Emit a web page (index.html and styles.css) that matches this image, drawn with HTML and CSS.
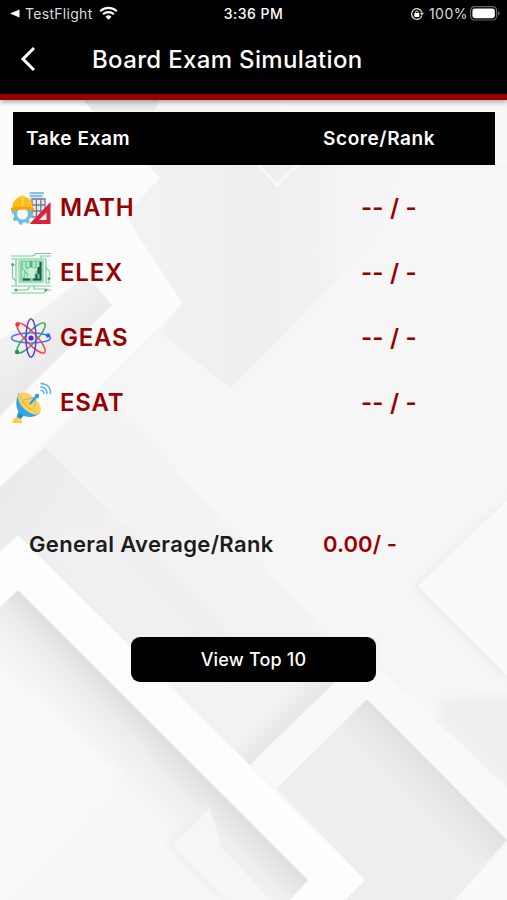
FILE: index.html
```html
<!DOCTYPE html>
<html lang="en">
<head>
    <meta charset="UTF-8">
    <meta name="viewport" content="width=device-width, initial-scale=1.0">
    <title>Board Exam Simulation</title>
    <link rel="stylesheet" href="styles.css">
</head>
<body>
    <!-- Background pattern -->
    <svg class="background" viewBox="0 0 507 900" aria-hidden="true">
        <defs>
            <linearGradient id="shadeDown" gradientUnits="userSpaceOnUse" x1="168" y1="740" x2="118" y2="790">
                <stop offset="0" stop-color="#dedede"/>
                <stop offset="0.4" stop-color="#eeeeee"/>
                <stop offset="1" stop-color="#f8f8f8"/>
            </linearGradient>
            <linearGradient id="shadeUp" gradientUnits="userSpaceOnUse" x1="100" y1="617" x2="165" y2="552">
                <stop offset="0" stop-color="#f4f4f4"/>
                <stop offset="1" stop-color="#ededed"/>
            </linearGradient>
            <linearGradient id="shadeCenter" gradientUnits="userSpaceOnUse" x1="150" y1="220" x2="370" y2="220">
                <stop offset="0" stop-color="#f2f2f2"/>
                <stop offset="0.5" stop-color="#eeeeee"/>
                <stop offset="1" stop-color="#f5f5f5"/>
            </linearGradient>
            <linearGradient id="shadeLeft" gradientUnits="userSpaceOnUse" x1="20" y1="330" x2="52" y2="366">
                <stop offset="0" stop-color="#f2f2f2"/>
                <stop offset="1" stop-color="#e9e9e9"/>
            </linearGradient>
            <linearGradient id="shadeLeftEnd" gradientUnits="userSpaceOnUse" x1="0" y1="487" x2="100" y2="560">
                <stop offset="0" stop-color="#ebebeb"/>
                <stop offset="1" stop-color="#f0f0f0"/>
            </linearGradient>
            <linearGradient id="shadeRight" gradientUnits="userSpaceOnUse" x1="437" y1="769" x2="400" y2="806">
                <stop offset="0" stop-color="#e0e0e0"/>
                <stop offset="0.5" stop-color="#eaeaea"/>
                <stop offset="1" stop-color="#f0f0f0"/>
            </linearGradient>
            <linearGradient id="shadeJoint" gradientUnits="userSpaceOnUse" x1="292" y1="724" x2="272" y2="704">
                <stop offset="0" stop-color="#e6e6e6"/>
                <stop offset="1" stop-color="#f2f2f2"/>
            </linearGradient>
            <filter id="soft" x="-30%" y="-30%" width="160%" height="160%">
                <feGaussianBlur stdDeviation="6"/>
            </filter>
        </defs>
        <rect width="507" height="900" fill="#f6f6f6"/>
        <!-- upper part -->
        <path d="M0 100H82L160 178L125 215L182 303L0 487Z" fill="#fcfcfc"/>
        <path d="M84 100H160L155 110H92Z" fill="#e8e8e8"/>
        <path d="M148 165H400L375 243L230 388L160 333L182 303L125 215L160 178Z" fill="url(#shadeCenter)"/>
        <path d="M300 165H507V100H280Z" fill="#f8f8f8"/>
        <path d="M258 165L277 185L298 165" fill="none" stroke="#f8f8f8" stroke-width="3"/>
        <path d="M160 325L182 303L125 215L100 245Z" fill="#fcfcfc"/>
        <path d="M0 340L85 277Q100 290 112 305L0 416Z" fill="url(#shadeLeft)"/>
        <path d="M45 447L102 390L330 637H232L97 500Z" fill="#f3f3f3"/>
        <path d="M0 487L45 447L232 637L175 692L18 535L0 552Z" fill="url(#shadeLeftEnd)"/>
        <path d="M45 535L125 530L232 637L175 665Z" fill="url(#shadeUp)" filter="url(#soft)"/>
        <path d="M507 455L465 489L507 530M507 470L480 489L507 515" fill="none" stroke="#f9f9f9" stroke-width="1.5"/>
        <!-- right square -->
        <path d="M510 498L414 586L510 680Z" fill="#ebebeb" filter="url(#soft)"/>
        <path d="M507 500L418 586L507 675Z" fill="#fafafa"/>
        <path d="M520 695L440 700L440 720L520 800Z" fill="#eeeeee" filter="url(#soft)"/>
        <!-- lower part -->
        <path d="M0 607L5 602L18 590L308 880L290 900H0Z" fill="url(#shadeDown)"/>
        <path d="M-20 650L120 775L-20 920Z" fill="#fafafa" filter="url(#soft)"/>
        <path d="M0 602L150 757L20 890M0 635L120 755L40 835" fill="none" stroke="#fafafa" stroke-width="0.8" opacity="0.7"/>
        <path d="M208 802L167 845L222 900H260Z" fill="#ededed" filter="url(#soft)"/>
        <path d="M215 803L172 845L227 900H290L308 880L222 794Z" fill="url(#shadeDown)"/>
        <path d="M210 808L172 845L227 900H270L222 848Z" fill="#f6f6f6"/>
        <path d="M232 637H380V665L250 765L150 665Z" fill="#f3f3f3"/>
        <path d="M232 682H335L250 765L175 692Z" fill="url(#shadeJoint)"/>
        <path d="M277 788L367 699L507 840L455 900H345L365 880Z" fill="#eeeeee"/>
        <path d="M367 699L507 840L473 875L335 730Z" fill="url(#shadeRight)"/>
        <path d="M250 765L335 682L385 672L507 788V840L367 699L277 788Z" fill="#f9f9f9"/>
        <path d="M507 845L455 900H507Z" fill="#fafafa"/>
        <path d="M0 552L18 535L365 880L345 900H290L308 880L18 590L5 602L0 607Z" fill="#fdfdfd"/>
    </svg>

    <div class="app">
        <header class="header">
            <div class="status-bar">
                <div class="status-left">
                    <svg width="10" height="9" viewBox="0 0 10 9"><path d="M0 4.5L9.5 0.5V8.5Z" fill="#fff"/></svg>
                    <span class="carrier">TestFlight</span>
                    <svg class="wifi" width="19" height="14" viewBox="0 0 19 14">
                        <path d="M1.2 5.2a12 12 0 0 1 16.6 0M4.1 8.3a7.8 7.8 0 0 1 10.8 0" fill="none" stroke="#fff" stroke-width="2.2"/>
                        <path d="M9.5 13.7L6.5 10.7a4.3 4.3 0 0 1 6 0Z" fill="#fff"/>
                    </svg>
                </div>
                <div class="status-time">3:36 PM</div>
                <div class="status-right">
                    <svg width="14" height="14" viewBox="0 0 14 14">
                        <path d="M11.9 8.6a5.3 5.3 0 1 1 0-3.2" fill="none" stroke="#ddd" stroke-width="1.3"/>
                        <path d="M9.8 5.8H14L11.9 8.5Z" fill="#ddd"/>
                        <rect x="4.3" y="6.1" width="5" height="3.8" rx="0.5" fill="#fff"/>
                        <path d="M5.5 6.5V5.3a1.3 1.3 0 0 1 2.6 0v1.2" fill="none" stroke="#fff" stroke-width="0.9"/>
                    </svg>
                    <span class="percent">100%</span>
                    <svg width="30" height="15" viewBox="0 0 30 15">
                        <rect x="0.6" y="0.6" width="26" height="13.4" rx="4" fill="none" stroke="#666" stroke-width="1.2"/>
                        <rect x="2.4" y="2.4" width="22.4" height="9.8" rx="2.4" fill="#fff"/>
                        <path d="M28 5q1.6 0.8 1.6 2.3t-1.6 2.3Z" fill="#666"/>
                    </svg>
                </div>
            </div>
            <div class="nav">
                <svg class="back" width="16" height="26" viewBox="0 0 16 26"><path d="M14 2L3 13L14 24" fill="none" stroke="#fff" stroke-width="3"/></svg>
                <h1 class="title">Board Exam Simulation</h1>
            </div>
        </header>

        <main class="content">
            <div class="table-head">
                <div class="col-exam">Take Exam</div>
                <div class="col-score">Score/Rank</div>
            </div>

            <div class="exam">
                <svg class="exam-icon" viewBox="0 0 42 42">
                    <path d="M19 5h15v22H19Z" fill="#dce9ef"/>
                    <path d="M20 6h14M20 9h12" stroke="#83c5e5" stroke-width="2"/>
                    <path d="M22 12h13v18H22Z" fill="#e8eaf0" stroke="#737884" stroke-width="1.3"/>
                    <path d="M26.4 12v18M30.8 12v18M22 18h13M22 24h13" stroke="#737884" stroke-width="1.3"/>
                    <path d="M40.500 15V37H19.500Z" fill="#d92140"/>
                    <path d="M36.500 25.500V33H29Z" fill="#f1ece5"/>
                    <circle cx="12.500" cy="27" r="7.200" fill="#fafafa" stroke="#6dbfe2" stroke-width="3.400"/>
                    <circle cx="12.500" cy="27" r="9.500" fill="none" stroke="#6dbfe2" stroke-width="2.500" stroke-dasharray="3.500 3.960"/>
                    <path d="M2 22C2 15 6 10 12.500 9C19 10 23 15 23 22Z" fill="#ffbd18"/>
                    <path d="M9.500 9.500Q12.500 7 15.500 9.500V19h-6Z" fill="#ffd33a"/>
                    <path d="M10 11v8M15 11v8" stroke="#ef9f11" stroke-width="0.8"/>
                    <path d="M1 21Q12 18 24 21V24Q12 21 1 24.500Z" fill="#f5a20c"/>
                </svg>
                <div class="exam-name">MATH</div>
                <div class="exam-score">-- / -</div>
            </div>

            <div class="exam">
                <svg class="exam-icon" viewBox="0 0 42 42">
                    <g fill="none" stroke="#77c99a" stroke-width="1.200">
                        <path d="M1 4H23L26 1.500H41M1 7H36V16L39.500 19V24"/>
                        <path d="M6 7V34H1M6 34H41M36 16V31H39V26"/>
                        <path d="M2.500 13V26L6 29M6 13H3M31 7V4H41M1 41H34L36 38H41M5 38H17L20 35M24 34V37H35"/>
                    </g>
                    <rect x="8" y="6.500" width="26" height="25" rx="2" fill="#a4e5be"/>
                    <rect x="10.500" y="9" width="22" height="20.500" fill="#7fcf9f"/>
                    <path d="M14 10V16L18 20M18 10V15M24 10V15M28 10V15L24 20M13 18V25M16 22V26" fill="none" stroke="#d3f5df" stroke-width="1.400"/>
                    <path d="M21 9V16" stroke="#4faa79" stroke-width="1.500"/>
                    <circle cx="21.500" cy="19.500" r="4" fill="#c4f0d4"/>
                    <path d="M18.500 23L17 26H25L24 23Z" fill="#c4f0d4"/>
                    <path d="M30.500 10V28M28.500 15V22M13 27.500H20M23 27.500H31M26.500 22V27" fill="none" stroke="#20594e" stroke-width="2"/>
                    <g fill="#4faa79"><circle cx="2.500" cy="12.500" r="1.500"/><circle cx="39" cy="26.500" r="1.500"/><circle cx="6" cy="38" r="1.500"/><circle cx="36" cy="38" r="1.500"/></g>
                </svg>
                <div class="exam-name">ELEX</div>
                <div class="exam-score">-- / -</div>
            </div>

            <div class="exam">
                <svg class="exam-icon" viewBox="0 0 42 42">
                    <g fill="none" stroke-width="1.500">
                        <ellipse cx="21" cy="21" rx="19.500" ry="5" stroke="#4c6fff"/>
                        <ellipse cx="21" cy="21" rx="20" ry="5.500" stroke="#36a96d" transform="rotate(-47 21 21)"/>
                        <ellipse cx="21" cy="21" rx="20" ry="5.500" stroke="#f4434c" transform="rotate(47 21 21)"/>
                        <ellipse cx="21" cy="21" rx="5" ry="19" stroke="#6539dc"/>
                    </g>
                    <circle cx="21" cy="21" r="4.300" fill="#eee6ff"/>
                    <circle cx="21" cy="21" r="2.600" fill="#5727cd"/>
                    <circle cx="7.500" cy="7.500" r="2.200" fill="#f52f35"/>
                    <circle cx="7" cy="35" r="2.200" fill="#169957"/>
                    <circle cx="38" cy="18.500" r="2.200" fill="#3466fa"/>
                </svg>
                <div class="exam-name">GEAS</div>
                <div class="exam-score">-- / -</div>
            </div>

            <div class="exam">
                <svg class="exam-icon" viewBox="0 0 42 42">
                    <path d="M9 28L6 37L10 38L15 32Z" fill="#218fd9"/>
                    <path d="M2 41Q3 36 7 35Q11 36 12.500 41Z" fill="#ffcf4c"/>
                    <path d="M9 11C4 20 6 31 14 34Q23 37 30 31Z" fill="#31a6ec"/>
                    <ellipse cx="19.500" cy="21.500" rx="14" ry="7.500" transform="rotate(43 19.500 21.500)" fill="#ffd15b"/>
                    <path d="M10 12Q13 21 19 25Q25 30 30 30Q22 31 15 24Q9 17 10 12Z" fill="#efbd46"/>
                    <path d="M19 23L26 15L13 18M26 15L24 27" fill="none" stroke="#8bbfae" stroke-width="1"/>
                    <path d="M20 22L26 15" stroke="#2a9be5" stroke-width="2"/>
                    <circle cx="27" cy="14" r="2.200" fill="#2a9be5"/>
                    <path d="M30.500 8.500Q34 8 34 12M30.500 5Q37 5 37 12M30.500 1.500Q41 2 40.500 12" fill="none" stroke="#51aef1" stroke-width="1.400"/>
                </svg>
                <div class="exam-name">ESAT</div>
                <div class="exam-score">-- / -</div>
            </div>

            <div class="average">
                <div class="average-label">General Average/Rank</div>
                <div class="average-score">0.00/ -</div>
            </div>

            <button class="button">View Top 10</button>
        </main>
    </div>
</body>
</html>
```
FILE: styles.css
```css
* {
    box-sizing: border-box;
}
body {
    font-family: Inter, "Liberation Sans", sans-serif;
    background-color: #f6f6f6;
    margin: 0;
    padding: 0;
}
svg {
    display: block;
    flex-shrink: 0;
}
.background {
    position: absolute;
    top: 0;
    left: 0;
    width: 507px;
    height: 900px;
}
.app {
    position: relative;
    width: 507px;
    height: 900px;
    overflow: hidden;
}
.header {
    height: 100px;
    background-color: #000;
    border-bottom: 6px solid #990000;
    box-shadow: 0 2px 5px rgba(0, 0, 0, 0.35);
    color: white;
}
.status-bar {
    display: grid;
    grid-template-columns: 1fr auto 1fr;
    align-items: center;
    height: 27px;
    padding: 0 8px 0 10px;
    font-size: 14px;
}
.status-left,
.status-right {
    display: flex;
    align-items: center;
}
.status-right {
    justify-content: flex-end;
    margin-right: -1px;
}
.carrier {
    margin-left: 5px;
    letter-spacing: 0.3px;
    color: #ddd;
}
.wifi {
    margin-left: 6px;
    margin-top: -2px;
}
.status-time {
    margin-left: -2px;
    font-weight: 500;
    letter-spacing: 0.5px;
}
.percent {
    margin: 0 2px 0 5px;
    letter-spacing: 0.5px;
    color: #ddd;
}
.nav {
    display: flex;
    align-items: center;
    height: 64px;
    padding-left: 20px;
}
.title {
    margin: 0 0 0 56px;
    font-size: 24px;
    font-weight: 500;
    letter-spacing: 0.34px;
    white-space: nowrap;
}
.content {
    display: flex;
    flex-direction: column;
    padding: 12px 12px 0 10px;
}
.table-head {
    display: flex;
    align-items: center;
    height: 53px;
    margin: 0 0 10px 3px;
    background-color: #000;
    color: white;
    font-size: 19px;
    font-weight: 600;
    letter-spacing: 0.6px;
}
.col-exam {
    width: 306px;
    padding-left: 13px;
}
.col-score {
    padding-left: 4px;
}
.exam {
    display: flex;
    align-items: center;
    height: 65px;
    color: #990000;
    font-size: 24px;
    font-weight: 600;
}
.exam-icon {
    width: 42px;
    height: 42px;
}
.exam-name {
    width: 301px;
    margin-left: 8px;
    letter-spacing: 0.8px;
}
.exam-score {
    white-space: nowrap;
    letter-spacing: 0.2px;
}
.average {
    display: flex;
    align-items: center;
    height: 44px;
    margin-top: 87px;
    padding-left: 19px;
    color: #1c1c1e;
    font-size: 22px;
    font-weight: 600;
}
.average-label {
    width: 294px;
    letter-spacing: 0.35px;
}
.average-score {
    color: #990000;
    letter-spacing: 0.1px;
}
.button {
    width: 245px;
    height: 45px;
    margin: 71px 0 0 121px;
    padding: 0;
    border: none;
    border-radius: 9px;
    background-color: #000;
    color: white;
    font-family: inherit;
    font-size: 18px;
    font-weight: 500;
    letter-spacing: 0.2px;
    cursor: pointer;
}
```
